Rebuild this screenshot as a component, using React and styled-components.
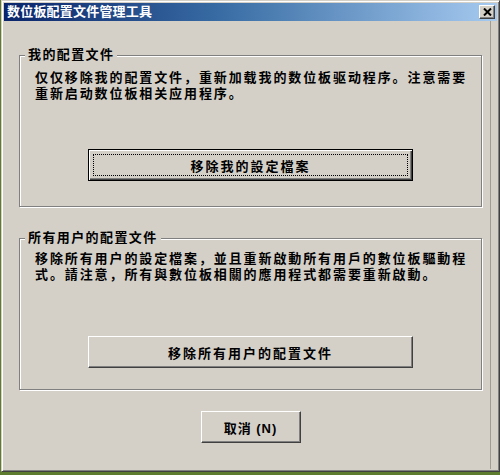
import React from "react";
import styled, { createGlobalStyle } from "styled-components";

const GlobalStyle = createGlobalStyle`
  html, body {
    margin: 0;
    padding: 0;
    background: #5d7c2e;
  }
  body {
    width: 500px;
    height: 475px;
    overflow: hidden;
  }
`;

const FONT = `"Liberation Sans", "Noto Sans CJK SC", sans-serif`;

const Window = styled.div`
  margin-left: 1px;
  width: 499px;
  height: 472px;
  box-sizing: border-box;
  background: #d4d0c8;
  border: 1px solid;
  border-color: #d4d0c8 #404040 #404040 #d4d0c8;
  box-shadow: inset 1px 1px 0 #ffffff, inset -1px -1px 0 #808080;
  padding: 2px;
  display: flex;
  flex-direction: column;
  font-family: ${FONT};
  color: #000;
`;

const TitleBar = styled.div`
  flex: none;
  height: 18px;
  background: linear-gradient(to right, #0a246a 0%, #3a6ea5 45%, #a6caf0 100%);
  display: flex;
  align-items: center;
  justify-content: space-between;
  padding: 0 2px 0 3px;
`;

const Title = styled.span`
  color: #fff;
  font-size: 13px;
  font-weight: 700;
  line-height: 16px;
  letter-spacing: 0.2px;
  white-space: nowrap;
`;

const CloseButton = styled.div`
  width: 16px;
  height: 14px;
  box-sizing: border-box;
  background: #d4d0c8;
  border: 1px solid;
  border-color: #ffffff #404040 #404040 #ffffff;
  box-shadow: inset -1px -1px 0 #808080;
  display: flex;
  align-items: center;
  justify-content: center;
`;

const Body = styled.div`
  flex: 1;
  display: flex;
  flex-direction: column;
  padding: 34px 8px 0 15px;
  margin-right: 6px;
  border-right: 1px solid #a09c94;
`;

const GroupBox = styled.div`
  position: relative;
  height: 152px;
  box-sizing: border-box;
  border: 1px solid #808080;
  box-shadow: inset 1px 1px 0 #ffffff, 1px 1px 0 #ffffff;
  padding: ${(p) => p.$padTop}px 0 0 15px;
  margin-top: ${(p) => p.$marginTop || 0}px;
  display: flex;
  flex-direction: column;
`;

const GroupLabel = styled.span`
  position: absolute;
  top: -9px;
  left: 5px;
  padding: 0 3px;
  background: #d4d0c8;
  font-size: 13px;
  font-weight: 700;
  line-height: 16px;
  letter-spacing: 1.4px;
  white-space: nowrap;
`;

const Desc = styled.div`
  font-size: 13px;
  font-weight: 700;
  line-height: 16px;
  letter-spacing: 1.9px;
  white-space: nowrap;
`;

const Line = styled.div``;

const Button = styled.button`
  position: relative;
  align-self: center;
  width: ${(p) => p.$width}px;
  height: 32px;
  margin: ${(p) => p.$marginTop}px 0 0 ${(p) => p.$shift || 0}px;
  box-sizing: border-box;
  background: #d4d0c8;
  font-family: ${FONT};
  font-size: 13px;
  font-weight: 700;
  letter-spacing: ${(p) => p.$spacing ?? 2}px;
  color: #000;
  padding: 0;
  cursor: default;
  border: 1px solid;
  border-color: ${(p) =>
    p.$default ? "#000 #000 #000 #000" : "#ffffff #404040 #404040 #ffffff"};
  box-shadow: ${(p) =>
    p.$default
      ? "inset 1px 1px 0 #ffffff, inset -1px -1px 0 #404040, inset -2px -2px 0 #808080"
      : "inset -1px -1px 0 #808080"};
  outline: none;

  &::after {
    content: "";
    display: ${(p) => (p.$default ? "block" : "none")};
    position: absolute;
    inset: 4px;
    border: 1px dotted #000;
  }
`;

const Groups = styled.div`
  display: flex;
  flex-direction: column;
`;

function CloseIcon() {
  return (
    <svg width="9" height="8" viewBox="0 0 9 8">
      <path d="M1 0.5 L8 7.5 M8 0.5 L1 7.5" stroke="#000" strokeWidth="2" />
    </svg>
  );
}

export default function App() {
  return (
    <>
      <GlobalStyle />
      <Window>
        <TitleBar>
          <Title>数位板配置文件管理工具</Title>
          <CloseButton>
            <CloseIcon />
          </CloseButton>
        </TitleBar>
        <Body>
          <Groups>
            <GroupBox $padTop={14}>
              <GroupLabel>我的配置文件</GroupLabel>
              <Desc>
                <Line>仅仅移除我的配置文件，重新加载我的数位板驱动程序。注意需要</Line>
                <Line>重新启动数位板相关应用程序。</Line>
              </Desc>
              <Button $default $width={325} $marginTop={47} $shift={-15}>
                移除我的設定檔案
              </Button>
            </GroupBox>
            <GroupBox $padTop={12} $marginTop={31}>
              <GroupLabel>所有用户的配置文件</GroupLabel>
              <Desc>
                <Line>移除所有用户的設定檔案，並且重新啟動所有用戶的數位板驅動程</Line>
                <Line>式。請注意，所有與數位板相關的應用程式都需要重新啟動。</Line>
              </Desc>
              <Button $width={325} $marginTop={53} $shift={-15}>
                移除所有用户的配置文件
              </Button>
            </GroupBox>
          </Groups>
          <Button $width={100} $marginTop={21} $spacing={1}>
            取消 (N)
          </Button>
        </Body>
      </Window>
    </>
  );
}
